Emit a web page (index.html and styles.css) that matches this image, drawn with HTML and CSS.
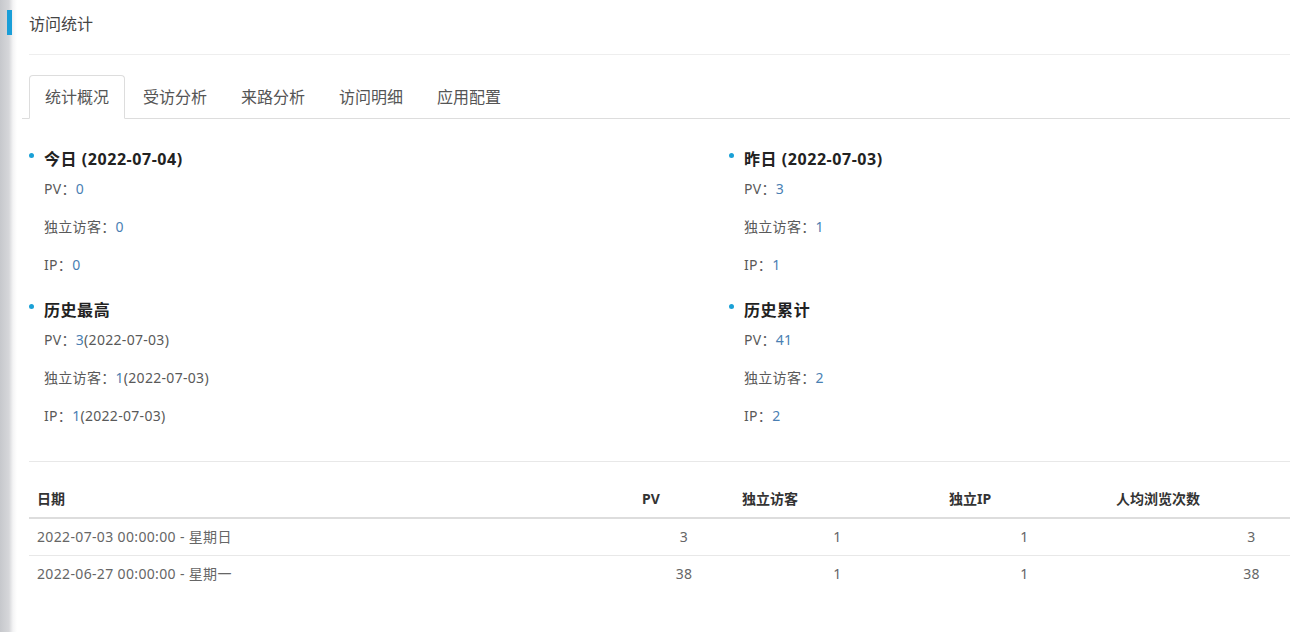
FILE: index.html
```html
<!DOCTYPE html>
<html>

<head lang="zh-CN">
    <meta charset="UTF-8">
    <title>访问统计</title>
    <link rel="stylesheet" href="styles.css">
</head>

<body>
    <div class="head">
        <span class="mark"></span>
        <span class="head-title">访问统计</span>
    </div>
    <div class="rule"></div>

    <ul class="tabs">
        <li class="tab active">统计概况</li>
        <li class="tab">受访分析</li>
        <li class="tab">来路分析</li>
        <li class="tab">访问明细</li>
        <li class="tab">应用配置</li>
    </ul>

    <div class="stats">
        <div class="col">
            <div class="group">
                <div class="group-title"><i class="dot"></i>今日 (2022-07-04)</div>
                <div class="item">PV：<span class="num">0</span></div>
                <div class="item">独立访客：<span class="num">0</span></div>
                <div class="item">IP：<span class="num">0</span></div>
            </div>
            <div class="group">
                <div class="group-title"><i class="dot"></i>历史最高</div>
                <div class="item">PV：<span class="num">3</span>(2022-07-03)</div>
                <div class="item">独立访客：<span class="num">1</span>(2022-07-03)</div>
                <div class="item">IP：<span class="num">1</span>(2022-07-03)</div>
            </div>
        </div>
        <div class="col">
            <div class="group">
                <div class="group-title"><i class="dot"></i>昨日 (2022-07-03)</div>
                <div class="item">PV：<span class="num">3</span></div>
                <div class="item">独立访客：<span class="num">1</span></div>
                <div class="item">IP：<span class="num">1</span></div>
            </div>
            <div class="group">
                <div class="group-title"><i class="dot"></i>历史累计</div>
                <div class="item">PV：<span class="num">41</span></div>
                <div class="item">独立访客：<span class="num">2</span></div>
                <div class="item">IP：<span class="num">2</span></div>
            </div>
        </div>
    </div>

    <div class="rule2"></div>

    <table class="list">
        <colgroup>
            <col class="c-date">
            <col class="c-pv">
            <col class="c-uv">
            <col class="c-ip">
            <col class="c-avg">
        </colgroup>
        <thead>
            <tr>
                <th>日期</th>
                <th>PV</th>
                <th>独立访客</th>
                <th>独立IP</th>
                <th>人均浏览次数</th>
            </tr>
        </thead>
        <tbody>
            <tr>
                <td>2022-07-03 00:00:00 - 星期日</td>
                <td class="c">3</td>
                <td class="c">1</td>
                <td class="c">1</td>
                <td class="c">3</td>
            </tr>
            <tr>
                <td>2022-06-27 00:00:00 - 星期一</td>
                <td class="c">38</td>
                <td class="c">1</td>
                <td class="c">1</td>
                <td class="c">38</td>
            </tr>
        </tbody>
    </table>
</body>

</html>
```

FILE: styles.css
```css
html,
body {
    overflow: hidden;
}

body {
    margin: 0;
    min-height: 632px;
    font-family: "Noto Sans", "Noto Sans CJK SC", sans-serif;
    font-size: 14px;
    color: #555;
    background: #fff linear-gradient(to right, #c6c8cc 0, #d6d7da 9px, #f4f4f5 13px, #fff 17px) no-repeat;
}

.head {
    display: flex;
    align-items: center;
    height: 45px;
}

.mark {
    width: 5px;
    height: 25px;
    margin-left: 7px;
    background: #199ed8;
}

.head-title {
    margin-left: 17px;
    font-size: 16px;
    color: #444;
}

.rule {
    margin: 9px 0 0 29px;
    border-top: 1px solid #eee;
    width: 1400px;
}

.tabs {
    display: flex;
    list-style: none;
    margin: 20px 0 0 22px;
    padding: 0 0 0 7px;
    border-bottom: 1px solid #ddd;
    width: 1400px;
}

.tab {
    padding: 10px 15px;
    line-height: 22px;
    font-size: 16px;
    color: #555;
    border: 1px solid transparent;
    border-radius: 4px 4px 0 0;
    margin: 0 2px -1px 0;
}

.tab.active {
    border-color: #ddd;
    border-bottom-color: #fff;
    background: #fff;
}

.stats {
    display: flex;
    margin: 27px 0 0 29px;
}

.col {
    width: 700px;
    flex: none;
}

.group {
    margin-bottom: 13px;
}

.group-title {
    display: flex;
    align-items: center;
    height: 24px;
    font-size: 16px;
    font-weight: bold;
    color: #222;
    letter-spacing: 0.55px;
}

.dot {
    width: 5px;
    height: 5px;
    border-radius: 50%;
    background: #1aa0d6;
    margin: -5px 10px 0 0;
}

.item {
    padding-left: 15px;
    line-height: 38px;
    color: #595959;
    letter-spacing: 0.3px;
}

.num {
    color: #4a7fb3;
}

.rule2 {
    margin: 13px 0 0 29px;
    border-top: 1px solid #e8e8e8;
    width: 1400px;
}

.list {
    margin: 19px 0 0 29px;
    width: 1366px;
    border-collapse: collapse;
    table-layout: fixed;
}

.c-date {
    width: 605px;
}

.c-pv {
    width: 100px;
}

.c-uv {
    width: 207px;
}

.c-ip {
    width: 167px;
}

.c-avg {
    width: 287px;
}

.list th {
    text-align: left;
    padding: 8px;
    line-height: 20px;
    font-weight: bold;
    color: #333;
    border-bottom: 2px solid #ddd;
}

.list td {
    padding: 8px;
    line-height: 20px;
    color: #666;
    border-top: 1px solid #e8e8e8;
    letter-spacing: 0.35px;
}

.list td.c {
    text-align: center;
}
```
